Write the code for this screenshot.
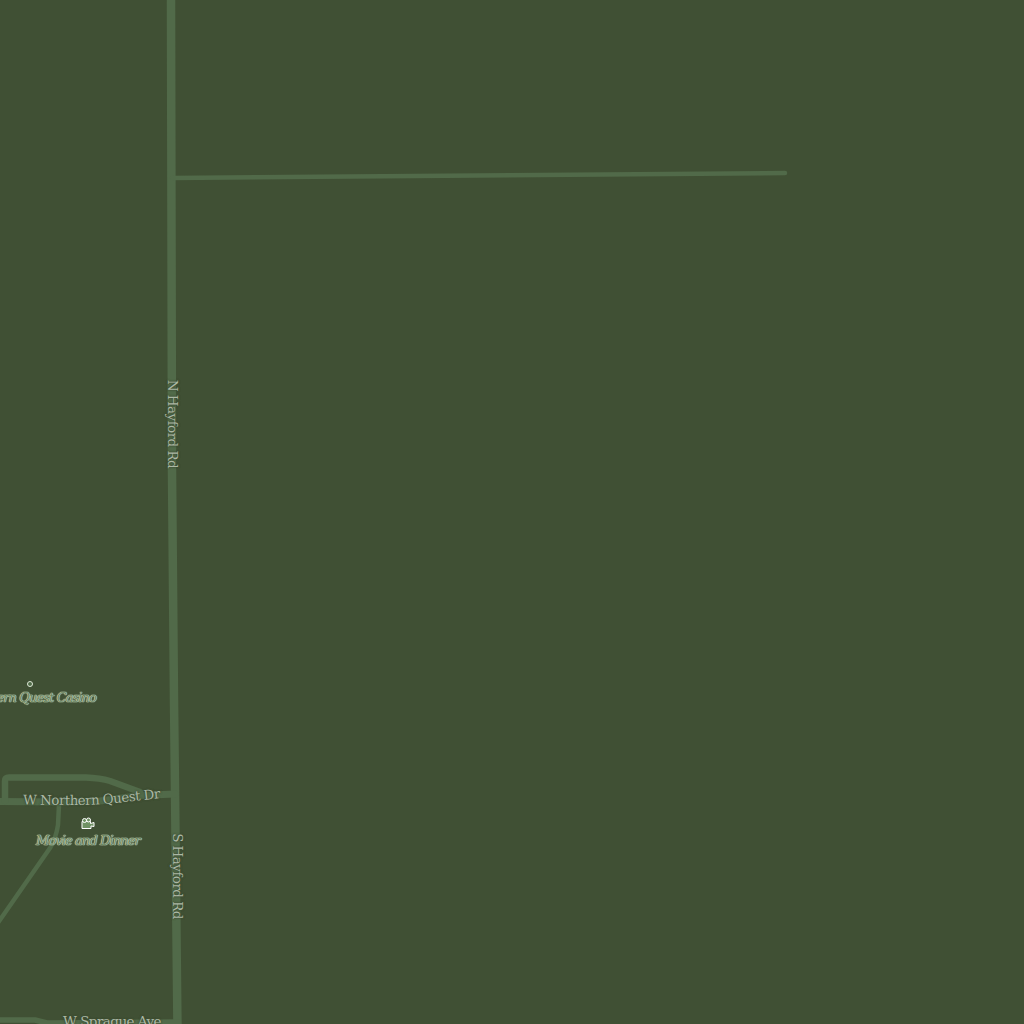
const ROADS = [
  { d: "M171 -5 L172 470 L174 700 L175 790 L177.5 1030", w: 8.5 },
  { d: "M172 178 L785 173", w: 4.5 },
  { d: "M-5 801.5 L60 802 L100 801 L140 795.5 L175 794", w: 7 },
  { d: "M5 801 L5 781 Q5 777.5 9 777.5 L86 777.5 Q100 778 110 781 L140 792", w: 6.5 },
  { d: "M59 805 L58 825 Q56 838 50 848 L-5 927", w: 4.5 },
  { d: "M-5 1020 L35 1020 L47 1023 L178 1022", w: 5.5 },
];

const LABELS = [
  { text: "N Hayford Rd", x: 172, y: 424, angle: 90 },
  { text: "S Hayford Rd", x: 177, y: 875.5, angle: 90 },
  { text: "W Sprague Ave", x: 112, y: 1022, angle: 0 },
];

export default function App() {
  return (
    <div
      className="relative h-[1024px] w-[1024px] overflow-hidden bg-[#405034]"
      style={{ fontFamily: '"DejaVu Serif", "Liberation Serif", serif' }}
    >
      <svg className="absolute inset-0" width="1024" height="1024" fill="none">
        {ROADS.map((r) => (
          <path key={r.d} d={r.d} stroke="#516a49" strokeWidth={r.w} strokeLinecap="round" strokeLinejoin="round" />
        ))}
        <path id="northern-quest" d="M23 804.5 L75 805 Q100 805 125 802 L162 798" />
        <text className="fill-[#acb8a5] text-[13.5px] tracking-[-0.55px] [text-shadow:0_0_2px_#3a4a30,0_0_2px_#3a4a30]">
          <textPath href="#northern-quest">W Northern Quest Dr</textPath>
        </text>
      </svg>

      {LABELS.map((l) => (
        <span
          key={l.text}
          className="absolute whitespace-nowrap text-[13.5px] leading-none tracking-[-0.55px] text-[#acb8a5] [text-shadow:0_0_2px_#3a4a30,0_0_2px_#3a4a30]"
          style={{ left: l.x, top: l.y, transform: `translate(-50%, -50%) rotate(${l.angle}deg)` }}
        >
          {l.text}
        </span>
      ))}

      {/* points of interest */}
      <svg className="absolute left-[26px] top-[680px]" width="8" height="8" fill="none">
        <circle cx="4" cy="4" r="2.5" fill="#506b48" stroke="#dfe9d8" strokeWidth="1" />
      </svg>
      <span className="absolute left-[96px] top-[690px] -translate-x-full whitespace-nowrap text-[13px] italic leading-4 tracking-[-0.9px] text-[#6d8863] [text-shadow:0_0_1px_#c4d6ba,0_0_1px_#c4d6ba,0_0_1px_#c4d6ba,0_0_1px_#c4d6ba]">
        Northern Quest Casino
      </span>

      <svg className="absolute left-[81px] top-[817px]" width="14" height="13" viewBox="0 0 14 13" fill="none">
        <path d="M1 4.5 L9.5 4.5 L9.5 6.5 L13 5.5 L13 9.5 L10 9 L10 11.5 L1 11.5 Z" fill="#6f9163" stroke="#fff" strokeWidth="1" strokeLinejoin="round" />
        <circle cx="3.5" cy="3.5" r="2" fill="#6f9163" stroke="#fff" strokeWidth="1" />
        <circle cx="7.5" cy="3" r="2" fill="#6f9163" stroke="#fff" strokeWidth="1" />
      </svg>
      <span className="absolute left-[88px] top-[833px] -translate-x-1/2 whitespace-nowrap text-[13px] italic leading-4 tracking-[-0.9px] text-[#6d8863] [text-shadow:0_0_1px_#c4d6ba,0_0_1px_#c4d6ba,0_0_1px_#c4d6ba,0_0_1px_#c4d6ba]">
        Movie and Dinner
      </span>
    </div>
  );
}
